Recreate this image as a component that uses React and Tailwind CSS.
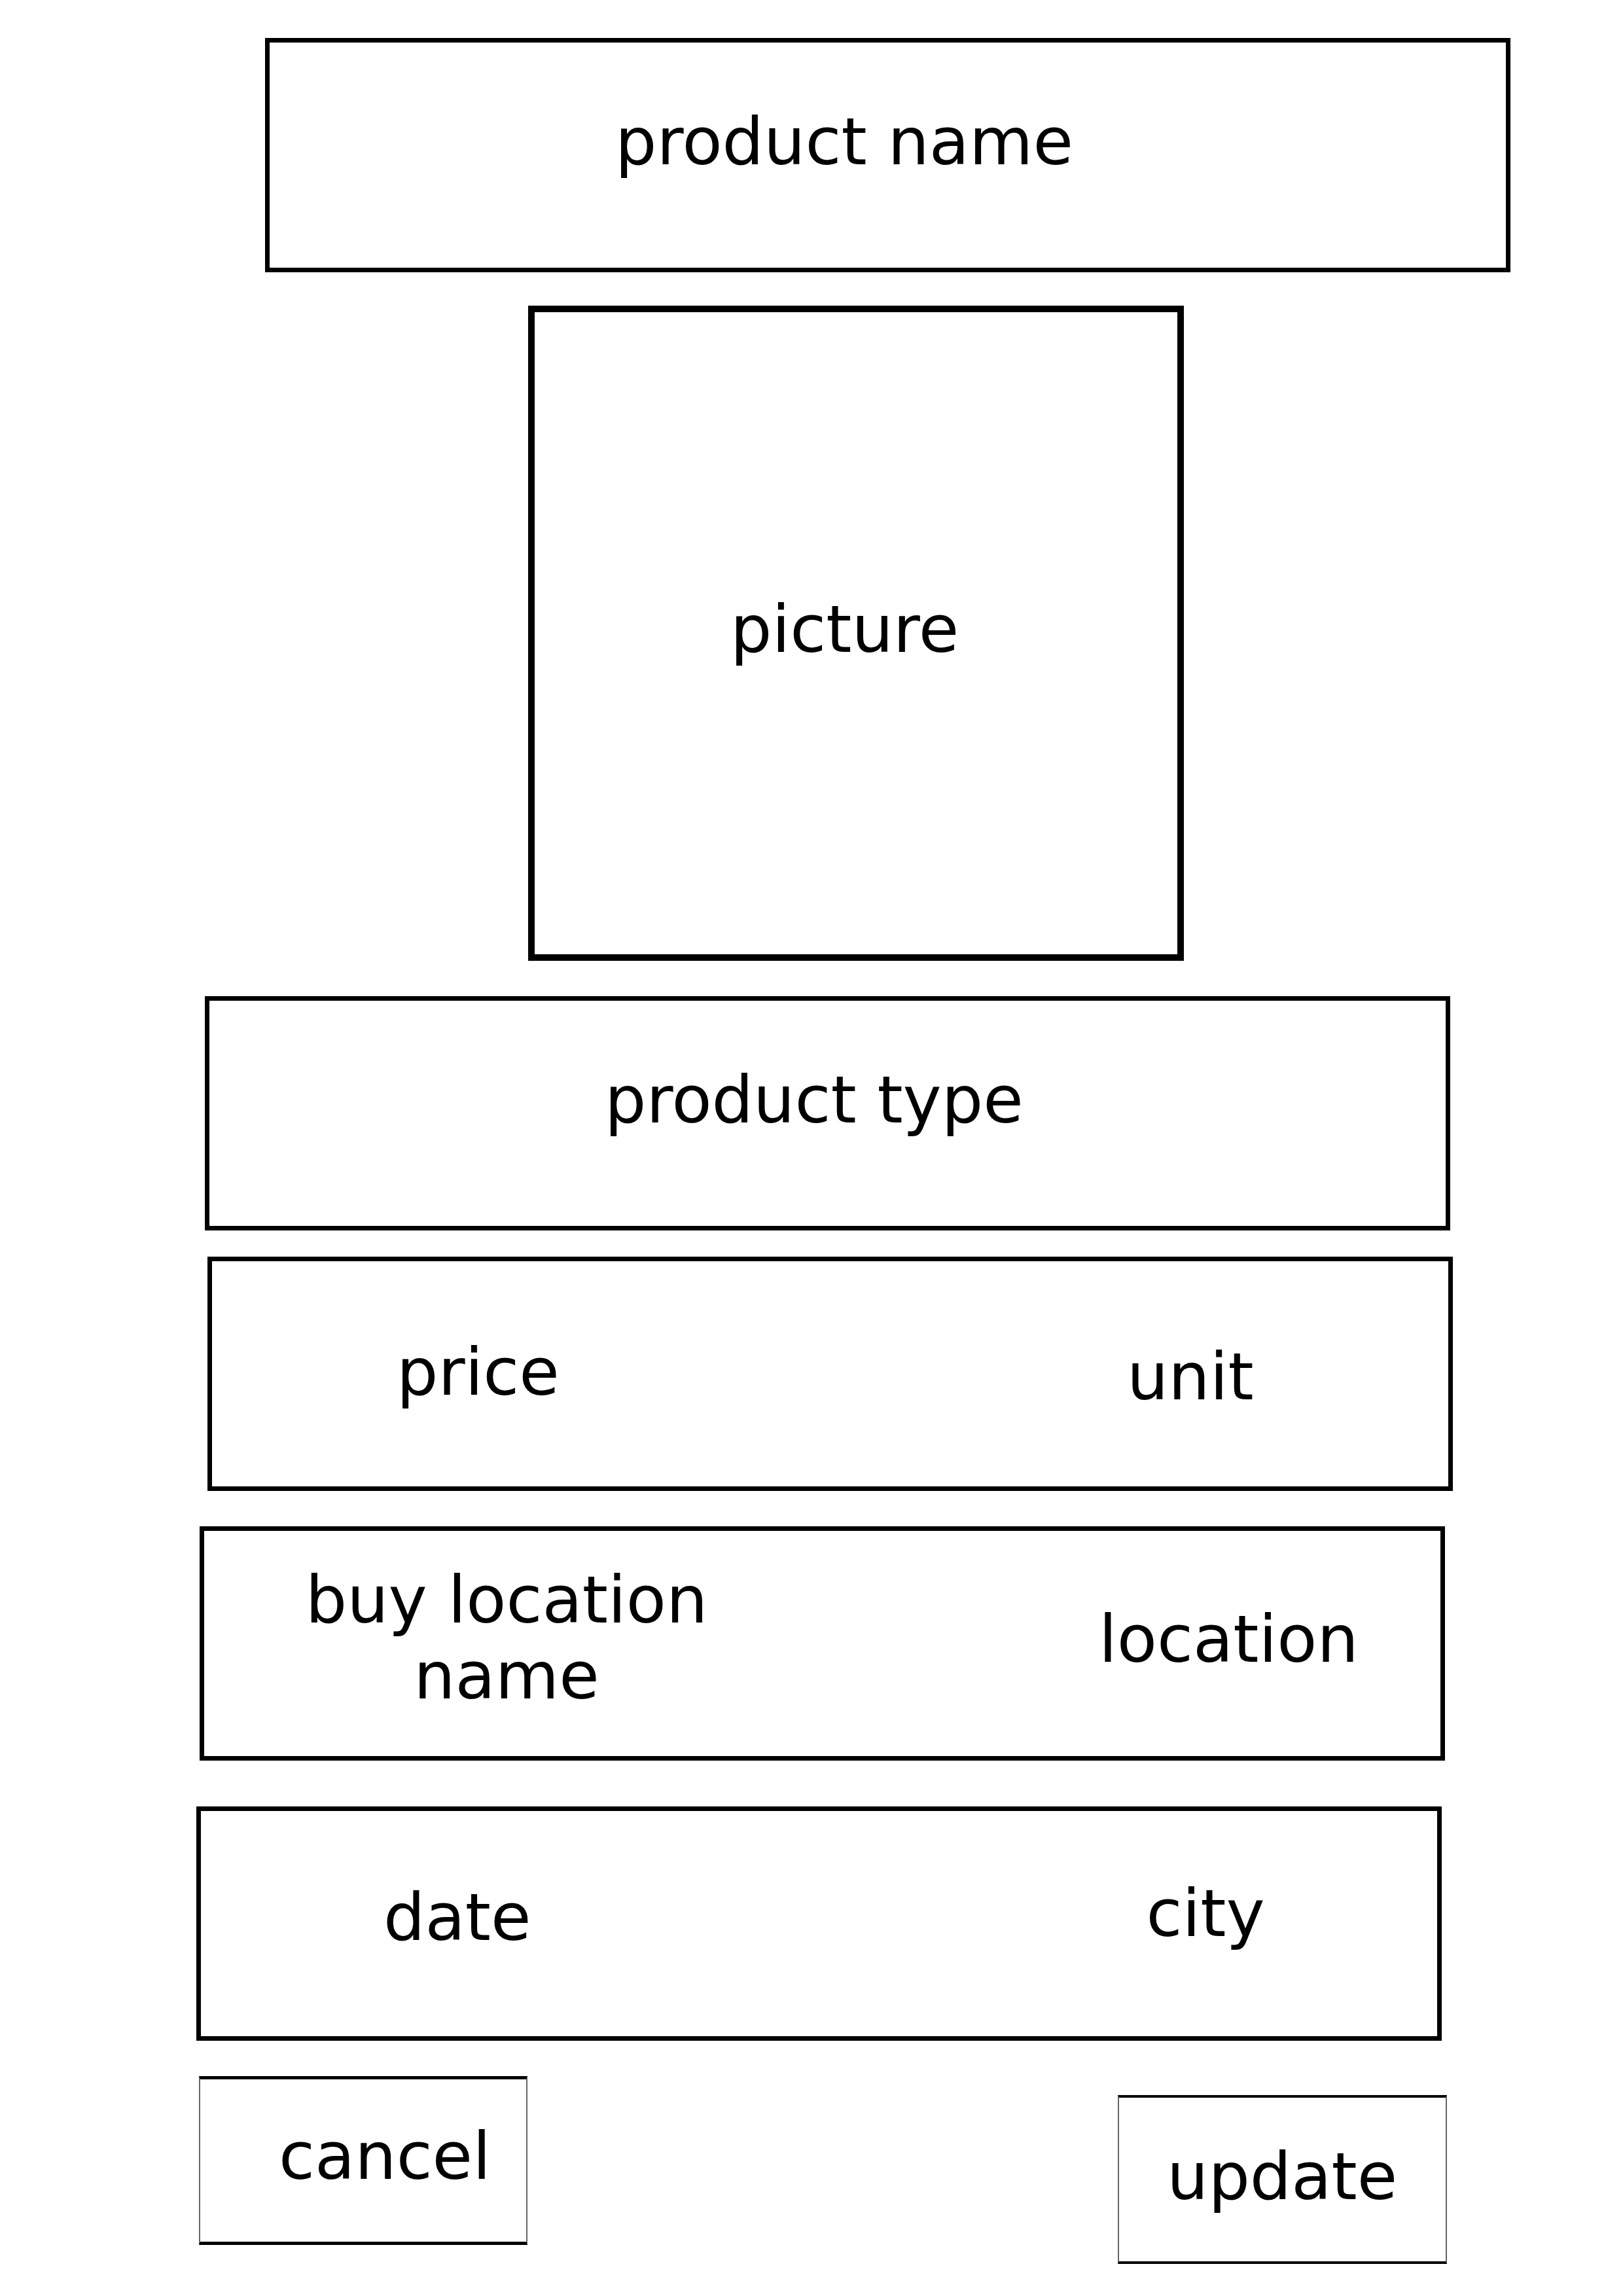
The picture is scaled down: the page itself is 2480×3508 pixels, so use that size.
export default function App() {
  return (
    <div className="w-[2480px] h-[3508px] bg-white text-black font-['DejaVu_Sans',sans-serif] text-[100px] leading-[116px] pt-[58px] flex flex-col">
      {/* product name */}
      <div className="ml-[405px] w-[1903px] h-[358px] border-[7px] border-black pl-[528px] pt-[94px]">
        product name
      </div>

      {/* picture */}
      <div className="mt-[51px] ml-[807px] w-[1002px] h-[1001px] border-[10px] border-black pl-[299px] pt-[427px]">
        picture
      </div>

      {/* product type */}
      <div className="mt-[54px] ml-[313px] w-[1903px] h-[358px] border-[7px] border-black pl-[604px] pt-[94px]">
        product type
      </div>

      {/* price / unit */}
      <div className="mt-[40px] ml-[317px] w-[1903px] h-[358px] border-[7px] border-black flex items-start">
        <span className="ml-[282px] mt-[112px]">price</span>
        <span className="ml-[867px] mt-[119px]">unit</span>
      </div>

      {/* buy location name / location */}
      <div className="mt-[54px] ml-[305px] w-[1903px] h-[358px] border-[7px] border-black flex items-start">
        <div className="ml-[112px] mt-[48px] w-[700px] text-center">
          buy location
          <br />
          name
        </div>
        <span className="ml-[555px] mt-[108px]">location</span>
      </div>

      {/* date / city */}
      <div className="mt-[70px] ml-[300px] w-[1903px] h-[358px] border-[7px] border-black flex items-start">
        <span className="ml-[279px] mt-[105px]">date</span>
        <span className="ml-[940px] mt-[99px]">city</span>
      </div>

      {/* buttons */}
      <div className="mt-[54px] flex items-start">
        <button className="ml-[304px] w-[502px] h-[258px] border-y-[5px] border-y-black border-x-2 border-x-[#666] pl-[120px] pt-[60px] text-left flex items-start">
          cancel
        </button>
        <button className="ml-[902px] mt-[29px] w-[503px] h-[258px] border-y-[4px] border-y-black border-x-2 border-x-[#666] pl-[73px] pt-[63px] text-left flex items-start">
          update
        </button>
      </div>
    </div>
  );
}
